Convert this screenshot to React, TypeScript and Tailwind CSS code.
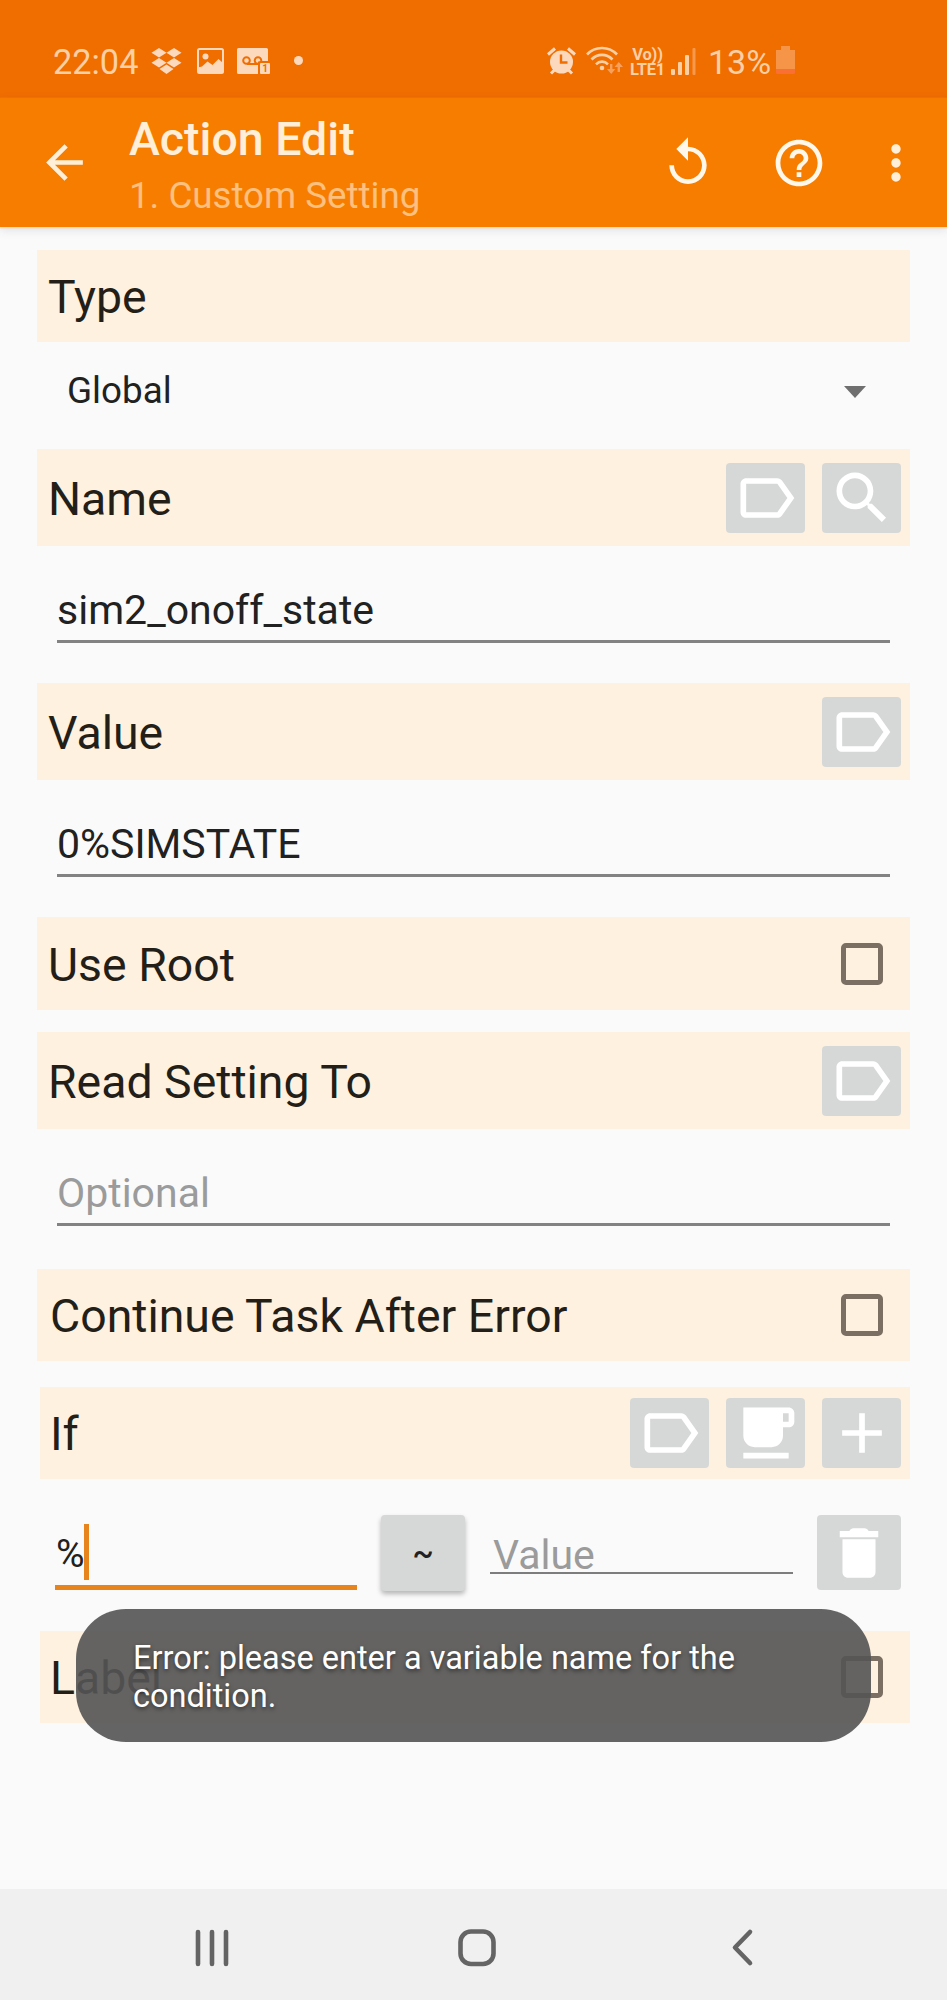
import type { ReactNode } from 'react';
import { MdArrowBack, MdHelpOutline, MdMoreVert, MdReplay } from 'react-icons/md';

const iconPaths = {
  label:
    'M17.63 5.84C17.27 5.33 16.67 5 16 5L5 5.01C3.9 5.01 3 5.9 3 7v10c0 1.1.9 1.99 2 1.99L16 19c.67 0 1.27-.33 1.63-.84L22 12l-4.37-6.16zM16 17H5V7h11l3.55 5L16 17z',
  search:
    'M15.5 14h-.79l-.28-.27C15.41 12.59 16 11.11 16 9.5 16 5.91 13.09 3 9.5 3S3 5.91 3 9.5 5.91 16 9.5 16c1.61 0 3.09-.59 4.23-1.57l.27.28v.79l5 4.99L20.49 19l-4.99-5zm-6 0C7.01 14 5 11.99 5 9.5S7.01 5 9.5 5 14 7.01 14 9.5 11.99 14 9.5 14z',
  cup: 'M20 3H4v10c0 2.21 1.79 4 4 4h6c2.21 0 4-1.79 4-4v-3h2c1.11 0 2-.9 2-2V5c0-1.11-.89-2-2-2zm0 5h-2V5h2v3zM4 19h16v2H4z',
  plus: 'M19 13h-6v6h-2v-6H5v-2h6V5h2v6h6v2z',
  trash:
    'M6 19c0 1.1.9 2 2 2h8c1.1 0 2-.9 2-2V7H6v12zM19 4h-3.500c-.4-.6-.8-1-1.500-1h-4c-.7 0-1.100.4-1.500 1H5v2.300h14V4z',
};

type IconName = keyof typeof iconPaths;

function IconButton({ icon }: { icon: IconName }) {
  return (
    <button className="flex h-[70px] w-[79px] shrink-0 items-center justify-center rounded bg-[#d6d8d7]">
      <svg viewBox="0 0 24 24" className="h-[68px] w-[68px] fill-white">
        <path d={iconPaths[icon]} />
      </svg>
    </button>
  );
}

function Checkbox() {
  return <span className="mr-[18px] h-[42px] w-[42px] rounded-[5px] border-[5px] border-[#7b6f63]" />;
}

function SectionBar({
  title,
  className,
  children,
}: {
  title: string;
  className: string;
  children?: ReactNode;
}) {
  return (
    <div className={`flex items-center justify-between bg-[#fff1df] pr-[9px] ${className}`}>
      <h2 className="pt-[3px] text-[46.4px] leading-none text-[#231f18]">{title}</h2>
      <div className="flex items-center gap-[17px]">{children}</div>
    </div>
  );
}

function TextField({ value, placeholder }: { value?: string; placeholder?: string }) {
  return (
    <div className="mr-5 ml-5 flex h-[97px] items-end border-b-[3px] border-[#828282] pb-[9px] text-[41px] leading-none">
      {value ? (
        <span className="text-[#212121]">{value}</span>
      ) : (
        <span className="text-[#9b9b9b]">{placeholder}</span>
      )}
    </div>
  );
}

function StatusBar() {
  return (
    <div className="flex h-[98px] items-center bg-[#f06d00] pl-[53px] text-[#fdcfa5]">
      <span className="w-[98px] pt-[26px] text-[34.3px] leading-none">22:04</span>

      {/* Dropbox */}
      <svg viewBox="0 0 31 26" className="mt-[23px] h-[26px] w-[31px] fill-[#fcd9bd]">
        <path d="M8 0l7.5 4.7L8 9.4.5 4.7zM23 0l7.5 4.7L23 9.4l-7.5-4.7zM8 10l7.5 4.7L8 19.4.5 14.7zM23 10l7.5 4.7-7.5 4.7-7.5-4.7zM15.5 16.5l7 4.5-7 5-7-5z" />
      </svg>

      {/* Picture */}
      <svg viewBox="0 0 27 26" className="mt-[23px] ml-[15px] h-[26px] w-[27px]">
        <rect x="1" y="1" width="25" height="24" rx="1.5" fill="none" stroke="#fcd9bd" strokeWidth="2" />
        <circle cx="8.5" cy="8.5" r="3" fill="#fcd9bd" />
        <path d="M1 19.500l4-1 5.500-5 5 3.500 6-6 4.500 4V25H1z" fill="#fcd9bd" />
      </svg>

      {/* Voicemail */}
      <svg viewBox="0 0 33 26" className="mt-[23px] ml-[13px] h-[26px] w-[33px]">
        <path d="M1.500 0H29.500a1.500 1.500 0 0 1 1.500 1.500V13h-8.500v13H1.500A1.500 1.500 0 0 1 0 24.500V1.500A1.500 1.500 0 0 1 1.500 0z" fill="#fcd9bd" />
        <path d="M10 16h11" stroke="#f06d00" strokeWidth="2" />
        <circle cx="9.500" cy="12.500" r="3.300" fill="none" stroke="#f06d00" strokeWidth="2" />
        <circle cx="21" cy="12.500" r="3.300" fill="none" stroke="#f06d00" strokeWidth="2" />
        <rect x="21" y="13.500" width="12" height="13" fill="#f06d00" />
        <rect x="23" y="15" width="10" height="11" rx="1" fill="#fcd9bd" />
        <text x="25.200" y="24.200" fontSize="10" fontWeight="700" fill="#f06d00">
          1
        </text>
      </svg>
      <span className="mt-[23px] ml-6 h-[9px] w-[9px] rounded-full bg-[#fcd9bd]" />

      {/* Alarm */}
      <svg viewBox="0 0 29 28" className="mt-[24px] ml-[244px] h-7 w-[29px]">
        <g fill="none" stroke="#fcd9bd" strokeWidth="3">
          <path d="M1 7.500L8 1.500M28 7.500L21 1.500M4 26.500l4-4M25 26.500l-4-4" />
        </g>
        <circle cx="14.500" cy="15" r="11.500" fill="#fcd9bd" />
        <path d="M14 7.500V15.500h6.500" fill="none" stroke="#f06d00" strokeWidth="2.400" />
      </svg>

      {/* Wi-Fi with traffic arrows */}
      <svg viewBox="0 0 37 28" className="mt-[22px] ml-[10px] h-7 w-[37px]">
        <g fill="none" stroke="#fdcfa5" strokeWidth="2.600">
          <path d="M1 8.500c8-8.700 22-8.700 30 0M5.500 13.500c6-6.200 15-6.200 21 0M10 18.300c3.500-3.600 8.500-3.600 12 0" />
        </g>
        <circle cx="16" cy="22" r="2.300" fill="#fdcfa5" />
        <path d="M24 18h2.400v5h3L25.200 28 21 23h3zM31.600 26H34v-5h3l-4.200-5-4.200 5h3z" fill="#f6a05c" />
      </svg>

      <span className="mt-[25px] ml-[7px] flex w-[35px] flex-col items-center text-[16.5px] leading-[15px] font-bold tracking-[-0.2px]">
        <span>Vo))</span>
        <span>LTE1</span>
      </span>

      {/* Signal strength */}
      <svg viewBox="0 0 25 27" className="mt-[24px] ml-[6px] h-[27px] w-[25px] fill-[#fdcfa5]">
        <rect x="0" y="21" width="4" height="6" rx="1" />
        <rect x="7" y="14" width="4" height="13" rx="1" />
        <rect x="14" y="7" width="4" height="20" rx="1" />
        <rect x="21.500" y="0" width="3" height="27" rx="1" fill="#f6994d" />
      </svg>

      <span className="ml-[12px] w-[65px] pt-[26px] text-[34px] leading-none">13%</span>

      {/* Battery */}
      <svg viewBox="0 0 19 28" className="mt-[22px] ml-[3px] h-7 w-[19px]">
        <path d="M5 0h9v4h5v19H0V4h5z" fill="#f69448" />
        <path d="M0 23h19v3.500a1.500 1.500 0 0 1-1.500 1.500h-16A1.500 1.500 0 0 1 0 26.500z" fill="#fa6f33" />
      </svg>
    </div>
  );
}

function AppBar() {
  return (
    <header className="flex h-[129px] items-center bg-[#f77d00] pl-[37px] text-[#fff8ea] shadow-[0_1px_2px_#ffd09a,0_3px_9px_rgba(60,70,120,0.14)]">
      <MdArrowBack className="h-[55px] w-[55px] text-[#ffefd8]" />
      <div className="ml-[37px] flex h-full w-[531px] flex-col">
        <h1 className="mt-[18px] text-[46.5px] leading-none font-medium text-[#ffefd8]">Action Edit</h1>
        <p className="mt-[15px] text-[36.7px] leading-none text-[#fdc07f]">1. Custom Setting</p>
      </div>
      <MdReplay className="h-[56px] w-[56px]" />
      <MdHelpOutline className="ml-[55px] h-[56px] w-[56px]" />
      <MdMoreVert className="ml-[41px] h-[56px] w-[56px] text-[#ffefd8]" />
    </header>
  );
}

function ConditionRow() {
  return (
    <div className="flex h-[152px] items-start pt-[36px] pl-[18px] text-[41px] leading-none">
      <div className="flex h-[75px] w-[302px] border-b-[5px] border-[#e8841c] pl-px">
        <span className="mt-[20px] w-[28px] text-[39px] leading-none text-[#212121]">%</span>
        <span className="mt-[9px] h-[56px] w-[5px] bg-[#e8841c]" />
      </div>
      <button className="ml-6 h-[76px] w-[84px] rounded bg-[#d6d8d7] text-[32px] font-medium text-[#212121] shadow-[0_3px_5px_rgba(0,0,0,0.28)]">
        ~
      </button>
      <div className="ml-[25px] flex h-[59px] w-[303px] items-end border-b-2 border-[#7d7d7d] pl-[3px]">
        <span className="-mb-[4px] text-[#9b9b9b]">Value</span>
      </div>
      <button className="ml-6 flex h-[75px] w-[84px] items-center justify-center rounded bg-[#d6d8d7]">
        <svg viewBox="0 0 24 24" className="h-[66px] w-[66px] fill-white">
          <path d={iconPaths.trash} />
        </svg>
      </button>
    </div>
  );
}

function NavigationBar() {
  return (
    <nav className="flex h-[111px] items-center bg-[#f0f0f0]">
      <svg viewBox="0 0 947 111" className="h-[111px] w-[947px] fill-none stroke-[#646464]">
        <path d="M198 43v32M212 43v32M226 43v32" strokeWidth="4.600" strokeLinecap="round" />
        <rect x="460.500" y="42.500" width="33" height="32.500" rx="10.500" strokeWidth="4.600" />
        <path d="M750 43l-15 15.500 15 15.500" strokeWidth="4.600" strokeLinecap="round" strokeLinejoin="round" />
      </svg>
    </nav>
  );
}

export default function App() {
  return (
    <div className="relative flex h-[2000px] w-[947px] flex-col overflow-hidden bg-[#fafafa] font-['Roboto',sans-serif]">
      <StatusBar />
      <AppBar />

      <main className="flex-1 pt-[23px] pr-[37px] pl-[37px]">
        <SectionBar title="Type" className="h-[92px] pl-[11px]" />
        <div className="flex h-[107px] items-center justify-between pr-[44px] pb-2 pl-[30px]">
          <span className="text-[36.8px] leading-none text-[#212121]">Global</span>
          <svg viewBox="0 0 22 12" className="h-[12px] w-[22px] fill-[#6f6f6f]">
            <path d="M0 0h22L11 12z" />
          </svg>
        </div>

        <SectionBar title="Name" className="h-[97px] pl-[11px]">
          <IconButton icon="label" />
          <IconButton icon="search" />
        </SectionBar>
        <TextField value="sim2_onoff_state" />

        <SectionBar title="Value" className="mt-10 h-[97px] pl-[11px]">
          <IconButton icon="label" />
        </SectionBar>
        <TextField value="0%SIMSTATE" />

        <SectionBar title="Use Root" className="mt-10 h-[93px] pl-[11px]">
          <Checkbox />
        </SectionBar>

        <SectionBar title="Read Setting To" className="mt-[22px] h-[97px] pl-[11px]">
          <IconButton icon="label" />
        </SectionBar>
        <TextField placeholder="Optional" />

        <SectionBar title="Continue Task After Error" className="mt-[43px] h-[92px] pl-[13px]">
          <Checkbox />
        </SectionBar>

        <SectionBar title="If" className="mt-[26px] ml-[3px] h-[92px] pl-[10px]">
          <IconButton icon="label" />
          <IconButton icon="cup" />
          <IconButton icon="plus" />
        </SectionBar>
        <ConditionRow />

        <SectionBar title="Label" className="ml-[3px] h-[92px] pl-[10px]">
          <Checkbox />
        </SectionBar>
      </main>

      <NavigationBar />

      {/* Toast */}
      <div className="absolute top-[1609px] left-[76px] h-[133px] w-[795px] rounded-[50px] bg-[#555555]/91 pt-[30px] pl-[57px] text-[32.5px] leading-[38px] text-white [text-shadow:0_2px_4px_rgba(0,0,0,0.5)]">
        Error: please enter a variable name for the
        <br />
        condition.
      </div>
    </div>
  );
}
